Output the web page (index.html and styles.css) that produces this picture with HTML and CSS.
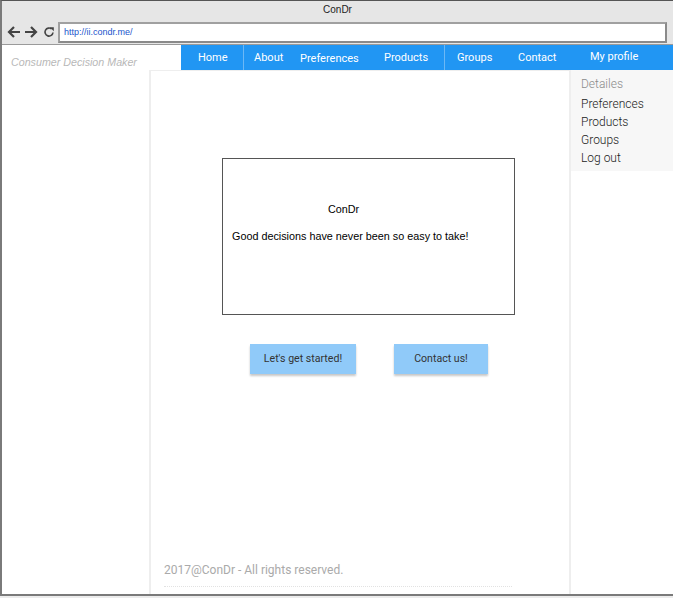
FILE: index.html
```html
<!DOCTYPE html>
<html>
<head>
<meta charset="utf-8">
<title>ConDr</title>
<link rel="stylesheet" href="styles.css">
</head>
<body>
<div class="window">
  <div class="titlebar">
    <div class="title">ConDr</div>
    <div class="addr-row">
      <svg class="ico" width="14" height="14" viewBox="0 0 14 14"><path d="M13 7H2M7 2L2 7l5 5" fill="none" stroke="#444" stroke-width="2.2"/></svg>
      <svg class="ico" width="14" height="14" viewBox="0 0 14 14"><path d="M1 7h11M7 2l5 5-5 5" fill="none" stroke="#444" stroke-width="2.2"/></svg>
      <svg class="ico reload" width="12" height="12" viewBox="0 0 12 12"><path d="M10 6.5A4 4 0 1 1 8.6 3" fill="none" stroke="#444" stroke-width="1.6"/><path d="M6.8 1.2h4v4z" fill="#444"/></svg>
      <div class="url">http://ii.condr.me/</div>
    </div>
  </div>
  <div class="header">
    <div class="brand">Consumer Decision Maker</div>
    <nav class="nav">
      <a class="item w-home sep">Home</a>
      <a class="item w-about">About</a>
      <a class="item w-pref">Preferences</a>
      <a class="item w-prod sep">Products</a>
      <a class="item w-groups">Groups</a>
      <a class="item w-contact">Contact</a>
      <a class="item w-profile">My profile</a>
    </nav>
  </div>
  <div class="body">
    <div class="left"></div>
    <div class="center">
      <div class="hero">
        <div class="hero-title">ConDr</div>
        <div class="hero-text">Good decisions have never been so easy to take!</div>
      </div>
      <div class="actions">
        <button class="btn btn-start">Let's get started!</button>
        <button class="btn btn-contact">Contact us!</button>
      </div>
      <div class="footer">2017@ConDr - All rights reserved.</div>
    </div>
    <div class="right">
      <ul class="menu">
        <li class="menu-head">Detailes</li>
        <li>Preferences</li>
        <li>Products</li>
        <li>Groups</li>
        <li>Log out</li>
      </ul>
    </div>
  </div>
</div>
</body>
</html>
```
FILE: styles.css
```css
html, body {
  margin: 0;
  padding: 0;
}
body {
  width: 673px;
  height: 598px;
  background: #ececec;
  font-family: Roboto, "Liberation Sans", sans-serif;
  overflow: hidden;
}
.window {
  box-sizing: border-box;
  height: 596px;
  border-left: 2px solid #7a7a7a;
  border-top: 1px solid #555;
  border-bottom: 2px solid #7a7a7a;
  background: #fff;
  display: flex;
  flex-direction: column;
}
.titlebar {
  height: 44px;
  background: #e6e6e6;
  border-bottom: 1px solid #9a9a9a;
  box-sizing: border-box;
}
.title {
  height: 17px;
  line-height: 17px;
  text-align: center;
  font-family: "Liberation Sans", Arial, sans-serif;
  font-size: 10px;
  color: #222;
}
.addr-row {
  display: flex;
  align-items: center;
  height: 22px;
  padding-left: 5px;
  margin-top: 3px;
}
.ico {
  display: block;
  margin-right: 3px;
}
.ico.reload {
  margin-left: 2px;
  margin-right: 3px;
}
.url {
  box-sizing: border-box;
  width: 609px;
  height: 21px;
  background: #fff;
  border: 2px solid #8a8a8a;
  border-top-color: #a0a0a0;
  border-left-color: #a0a0a0;
  font-family: "Liberation Sans", Arial, sans-serif;
  font-size: 9px;
  line-height: 17px;
  padding-left: 4px;
  color: #2255cc;
}
.header {
  display: flex;
  height: 25px;
}
.brand {
  width: 179px;
  font-family: "Liberation Sans", Arial, sans-serif;
  font-style: italic;
  font-size: 10.7px;
  color: #b8b8b8;
  padding-left: 9px;
  box-sizing: border-box;
  line-height: 34px;
}
.nav {
  flex: 1;
  display: flex;
  background: #2196f3;
}
.item {
  display: block;
  box-sizing: border-box;
  text-align: left;
  color: #fff;
  font-size: 11px;
  font-weight: 400;
  line-height: 25px;
}
.item.sep {
  border-right: 1px solid #6cb8f5;
}
.w-home { width: 63px; padding-left: 17px; }
.w-about { width: 52px; padding-left: 10px; }
.w-pref { width: 84px; padding-left: 4px; padding-top: 1px; }
.w-prod { width: 65px; padding-left: 4px; }
.w-groups { width: 57px; padding-left: 12px; }
.w-contact { width: 69px; padding-left: 16px; }
.w-profile { flex: 1; padding-left: 19px; line-height: 23px; }
.body {
  flex: 1;
  display: flex;
  min-height: 0;
}
.left {
  width: 147px;
}
.center {
  width: 418px;
  border-left: 2px solid #eeeeee;
  border-right: 2px solid #eeeeee;
  border-top: 1px solid #eeeeee;
  display: flex;
  flex-direction: column;
}
.hero {
  box-sizing: border-box;
  width: 293px;
  height: 157px;
  margin-left: 71px;
  margin-top: 87px;
  border: 1px solid #555;
  font-family: "Liberation Sans", Arial, sans-serif;
  font-size: 10.8px;
  color: #000;
}
.hero-title {
  padding-left: 105px;
  margin-top: 43px;
  line-height: 14px;
}
.hero-text {
  padding-left: 9px;
  margin-top: 13px;
  line-height: 14px;
}
.actions {
  display: flex;
  gap: 38px;
  margin-left: 99px;
  margin-top: 29px;
}
.btn {
  height: 30px;
  border: 0;
  background: #90caf9;
  box-shadow: 0 2px 2px rgba(0, 0, 0, 0.22);
  font-family: Roboto, "Liberation Sans", sans-serif;
  font-size: 10.6px;
  color: #333;
  padding: 0;
  padding-bottom: 2px;
}
.btn-start { width: 106px; }
.btn-contact { width: 94px; }
.footer {
  margin-top: auto;
  margin-left: 13px;
  width: 348px;
  font-size: 12px;
  color: #aaaaaa;
  line-height: 14px;
  padding-bottom: 9px;
  border-bottom: 1px dotted #e2e2e2;
  margin-bottom: 7px;
}
.right {
  flex: 1;
}
.menu {
  list-style: none;
  margin: 0;
  padding: 5px 0 4px 10px;
  background: #f7f7f7;
  font-size: 12px;
  font-weight: 300;
  line-height: 18px;
  color: #222;
}
.menu-head {
  color: #8a8a8a;
  margin-bottom: 2px;
}
```
